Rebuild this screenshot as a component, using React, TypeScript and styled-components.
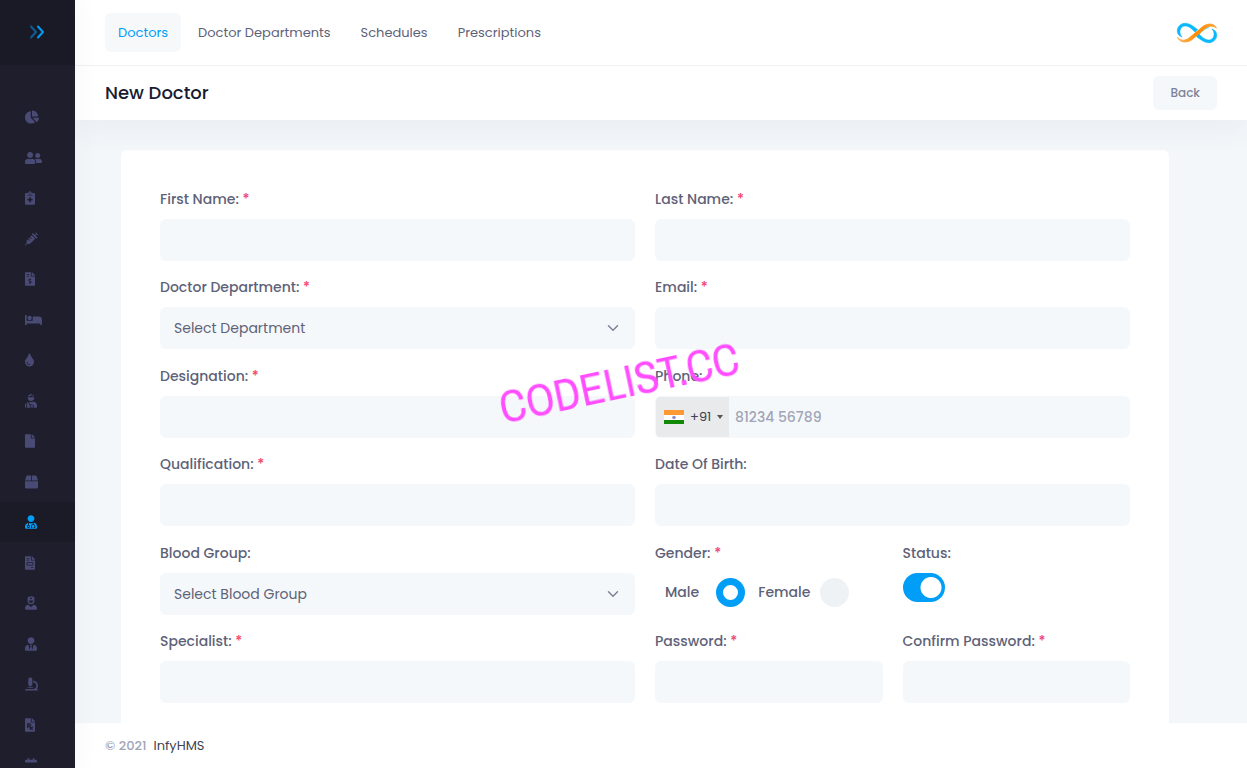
import React, { useState } from "react";
import styled, { createGlobalStyle, css } from "styled-components";
import type { IconType } from "react-icons";
import {
  FaBed,
  FaBox,
  FaCalendar,
  FaChartPie,
  FaFile,
  FaFileInvoice,
  FaFileInvoiceDollar,
  FaFilePrescription,
  FaMicroscope,
  FaNotesMedical,
  FaSyringe,
  FaTint,
  FaUserFriends,
  FaUserInjured,
  FaUserMd,
  FaUserNurse,
  FaUserTie,
} from "react-icons/fa";

const GlobalStyle = createGlobalStyle`
  *, *::before, *::after { box-sizing: border-box; }
  body {
    margin: 0;
    font-family: Poppins, Inter, "Noto Sans", sans-serif;
    font-size: 14px;
    color: #5e6278;
    background: #f3f7fa;
  }
  button, input, select { font: inherit; color: inherit; }
`;

const Shell = styled.div`
  display: flex;
  height: 100vh;
  overflow: hidden;
`;

const Sidebar = styled.aside`
  display: flex;
  flex-direction: column;
  flex: none;
  width: 75px;
  padding-bottom: 5px;
  background: #1e1e2d;
  box-shadow: 0 0 28px rgba(82, 63, 105, 0.05);
  z-index: 3;
`;

const SidebarToggle = styled.button`
  display: flex;
  align-items: center;
  justify-content: center;
  flex: none;
  height: 65px;
  padding: 0 2px 1px 0;
  border: 0;
  background: #1a1a27;
  cursor: pointer;
`;

const Menu = styled.ul`
  flex: 1;
  min-height: 0;
  margin: 32px 0 0;
  padding: 0;
  list-style: none;
  overflow-y: auto;
  scrollbar-width: none;
`;

const MenuItem = styled.li`
  height: 40px;
  &:nth-child(even) {
    height: 41px;
  }
`;

const MenuLink = styled.a<{ $iconWidth: number; $active?: boolean }>`
  display: flex;
  align-items: center;
  height: 100%;
  padding-left: 25px;
  color: ${(p) => (p.$active ? "#009ef7" : "#494b74")};
  background: ${(p) => (p.$active ? "#1b1b28" : "transparent")};
  > svg {
    width: ${(p) => p.$iconWidth}px;
    height: 14px;
  }
`;

const Main = styled.div`
  display: flex;
  flex-direction: column;
  flex: 1;
  min-width: 0;
`;

const Header = styled.header`
  display: flex;
  align-items: center;
  justify-content: space-between;
  flex: none;
  height: 66px;
  padding: 0 30px;
  background: #fff;
  border-bottom: 1px solid #eff0f4;
  z-index: 2;
`;

const Tabs = styled.nav`
  display: flex;
  gap: 4px;
`;

const Tab = styled.a<{ $active?: boolean }>`
  padding: 0 13px;
  border-radius: 6px;
  line-height: 39px;
  font-size: 13px;
  text-decoration: none;
  color: ${(p) => (p.$active ? "#009ef7" : "#5e6278")};
  background: ${(p) => (p.$active ? "#f7f8fa" : "transparent")};
`;

const Toolbar = styled.div`
  display: flex;
  align-items: center;
  justify-content: space-between;
  flex: none;
  height: 54px;
  padding: 0 30px;
  background: #fff;
  box-shadow: 0 10px 30px rgba(82, 63, 105, 0.05);
  z-index: 1;
`;

const Title = styled.h1`
  margin: 0;
  padding-bottom: 2px;
  font-size: 18px;
  font-weight: 500;
  color: #181c32;
`;

const BackButton = styled.button`
  height: 34px;
  padding: 0 17px;
  border: 0;
  border-radius: 6px;
  background: #f5f8fa;
  color: #7e8299;
  font-size: 12px;
  font-weight: 500;
  cursor: pointer;
`;

const Content = styled.main`
  flex: 1;
  min-height: 0;
  padding: 30px 78px 0 46px;
  overflow-y: auto;
  scrollbar-width: none;
`;

const Card = styled.form`
  padding: 39px;
  border-radius: 6px;
  background: #fff;
`;

const Row = styled.div`
  display: grid;
  grid-template-columns: 1fr 1fr;
  column-gap: 20px;
  height: 88px;
  &:nth-child(even) {
    height: 89px;
  }
`;

const Split = styled.div`
  display: grid;
  grid-template-columns: 1fr 1fr;
  column-gap: 20px;
`;

const FieldBox = styled.div`
  display: flex;
  flex-direction: column;
  gap: 10px;
  min-width: 0;
`;

const Label = styled.label`
  line-height: 20px;
  font-weight: 500;
  white-space: nowrap;
`;

const Star = styled.span`
  color: #f1416c;
`;

const control = css`
  width: 100%;
  height: 42px;
  border: 0;
  border-radius: 6px;
  background-color: #f5f8fa;
  outline: 0;
`;

const Input = styled.input`
  ${control}
  padding: 0 14px;
`;

const SelectWrap = styled.div`
  display: grid;
  align-items: center;
  > * {
    grid-area: 1 / 1;
  }
  > svg {
    justify-self: end;
    margin-right: 16px;
    pointer-events: none;
  }
`;

const Select = styled.select`
  ${control}
  padding: 0 14px;
  appearance: none;
`;

const PhoneBox = styled.div`
  ${control}
  display: flex;
  padding: 1px;
`;

const DialCode = styled.button`
  display: flex;
  align-items: center;
  gap: 6px;
  flex: none;
  width: 73px;
  padding: 0 0 0 8px;
  border: 0;
  border-radius: 4px 0 0 4px;
  background: #e9eaec;
  color: #3f4254;
  font-size: 13px;
`;

const Caret = styled.span`
  border: 3px solid transparent;
  border-top: 4px solid #555;
  border-bottom: 0;
`;

const PhoneInput = styled.input`
  flex: 1;
  min-width: 0;
  padding: 0 6px;
  border: 0;
  background: transparent;
  outline: 0;
  &::placeholder {
    color: #a1a5b7;
    font-weight: 500;
    opacity: 1;
  }
`;

const Choices = styled.div`
  display: flex;
  align-items: center;
  height: 39px;
  padding-left: 10px;
`;

const ChoiceLabel = styled.label<{ $gap: number }>`
  display: flex;
  align-items: center;
  gap: ${(p) => p.$gap}px;
  margin-right: 13px;
  font-weight: 500;
`;

const Radio = styled.input`
  appearance: none;
  width: 29px;
  height: 29px;
  margin: 0;
  border-radius: 50%;
  background: #eff2f5;
  &:checked {
    border: 7px solid #009ef7;
    background: #fff;
  }
`;

const Switch = styled.input`
  appearance: none;
  width: 42px;
  height: 29px;
  margin: 0;
  border-radius: 15px;
  background: radial-gradient(circle at 14px 50%, #fff 10px, transparent 11px) #e4e6ef;
  &:checked {
    background: radial-gradient(circle at 28px 50%, #fff 10px, transparent 11px) #009ef7;
  }
`;

const Watermark = styled.div`
  position: fixed;
  left: 619px;
  top: 382px;
  z-index: 5;
  transform: translate(-50%, -50%) rotate(-12deg);
  font-family: "Arial Narrow", "Archivo Narrow", "Roboto Condensed", Roboto, "Liberation Sans", sans-serif;
  font-size: 45px;
  line-height: 1;
  color: #ff4dff;
  pointer-events: none;
`;

const Footer = styled.footer`
  display: flex;
  align-items: center;
  gap: 7px;
  flex: none;
  height: 45px;
  padding: 0 30px;
  background: #fff;
  font-size: 13px;
  color: #a1a5b7;
  font-weight: 500;
  z-index: 1;
`;

const FooterLink = styled.a`
  color: #3f4254;
  font-weight: 400;
  text-decoration: none;
`;

const menu: { name: string; Icon: IconType; width: number; active?: boolean }[] = [
  { name: "Dashboard", Icon: FaChartPie, width: 14 },
  { name: "Users", Icon: FaUserFriends, width: 17 },
  { name: "Appointments", Icon: FaNotesMedical, width: 10 },
  { name: "Vaccinations", Icon: FaSyringe, width: 13 },
  { name: "Billing", Icon: FaFileInvoiceDollar, width: 10 },
  { name: "Beds", Icon: FaBed, width: 17 },
  { name: "Blood bank", Icon: FaTint, width: 9 },
  { name: "Patients", Icon: FaUserInjured, width: 12 },
  { name: "Documents", Icon: FaFile, width: 10 },
  { name: "Inventory", Icon: FaBox, width: 13 },
  { name: "Doctors", Icon: FaUserMd, width: 12, active: true },
  { name: "Reports", Icon: FaFileInvoice, width: 10 },
  { name: "Nurses", Icon: FaUserNurse, width: 12 },
  { name: "Staff", Icon: FaUserTie, width: 12 },
  { name: "Laboratory", Icon: FaMicroscope, width: 13 },
  { name: "Prescriptions", Icon: FaFilePrescription, width: 10 },
  { name: "Calendar", Icon: FaCalendar, width: 12 },
];

const tabs = ["Doctors", "Doctor Departments", "Schedules", "Prescriptions"];

function Chevrons() {
  return (
    <svg width="16" height="14" viewBox="0 0 16 14" fill="none" stroke="#009ef7" strokeWidth="2" strokeLinecap="round" strokeLinejoin="round">
      <path d="M2 1.500 7 7l-5 5.500" opacity=".5" />
      <path d="M9 1.500 14 7l-5 5.500" />
    </svg>
  );
}

const loop = "M5 14C2 11 2 5 6.500 3.200 11 2 14 5 18 9l2.500-2.500C15 2 11-.5 6 .5-1.500 3-1.500 12 5 14z";

function Logo() {
  return (
    <svg width="40" height="20" viewBox="0 0 40 20" overflow="visible" role="img" aria-label="InfyHMS">
      <defs>
        <linearGradient id="orange" x1="0" x2="1">
          <stop offset="0" stopColor="#fbb561" />
          <stop offset=".5" stopColor="#ff8a00" />
          <stop offset="1" stopColor="#ffa133" />
        </linearGradient>
      </defs>
      <path d="M11 17C15 16 17 12 20 9M21 12c4-5 7-7 11-8" fill="none" stroke="#7fe3fb" strokeWidth="2" />
      <g fill="#08b8fb" stroke="#08b8fb" strokeWidth=".6">
        <path d={loop} />
        <path d={loop} transform="rotate(180 20 10)" />
      </g>
      <path
        fill="url(#orange)"
        stroke="url(#orange)"
        strokeWidth=".8"
        d="M.5 14C3 18 8 18 12 15L24 5C29 .500 36-1 39.500 5 35 2 31 3 27.500 6L17 15C11 21 2 20 .5 14z"
      />
    </svg>
  );
}

function Flag() {
  return (
    <svg width="20" height="14" viewBox="0 0 20 14">
      <path fill="#f93" d="M0 0h20v5H0z" />
      <path fill="#fff" d="M0 5h20v5H0z" />
      <path fill="#128807" d="M0 10h20v4H0z" />
      <circle cx="10" cy="7.500" r="1.800" fill="#8d8dc8" />
    </svg>
  );
}

type FieldProps = { id: string; label: string; required?: boolean; children?: React.ReactNode };

function Field({ id, label, required, children }: FieldProps) {
  return (
    <FieldBox>
      <Label htmlFor={id}>
        {label}: {required && <Star>*</Star>}
      </Label>
      {children ?? <Input id={id} type={id.includes("assword") ? "password" : "text"} />}
    </FieldBox>
  );
}

function SelectField({ id, label, required, placeholder }: FieldProps & { placeholder: string }) {
  return (
    <Field id={id} label={label} required={required}>
      <SelectWrap>
        <Select id={id}>
          <option>{placeholder}</option>
        </Select>
        <svg width="12" height="12" viewBox="0 0 16 16" fill="none" stroke="#7e8299" strokeWidth="2" strokeLinecap="round" strokeLinejoin="round">
          <path d="M2 5l6 6 6-6" />
        </svg>
      </SelectWrap>
    </Field>
  );
}

export default function App() {
  const [gender, setGender] = useState("male");
  return (
    <Shell>
      <GlobalStyle />
      <Sidebar>
        <SidebarToggle aria-label="Expand menu">
          <Chevrons />
        </SidebarToggle>
        <Menu>
          {menu.map(({ name, Icon, width, active }) => (
            <MenuItem key={name}>
              <MenuLink href="#" aria-label={name} $iconWidth={width} $active={active}>
                <Icon />
              </MenuLink>
            </MenuItem>
          ))}
        </Menu>
      </Sidebar>
      <Main>
        <Header>
          <Tabs>
            {tabs.map((t, i) => (
              <Tab key={t} href="#" $active={i === 0}>
                {t}
              </Tab>
            ))}
          </Tabs>
          <Logo />
        </Header>
        <Toolbar>
          <Title>New Doctor</Title>
          <BackButton>Back</BackButton>
        </Toolbar>
        <Content>
          <Card>
            <Row>
              <Field id="firstName" label="First Name" required />
              <Field id="lastName" label="Last Name" required />
            </Row>
            <Row>
              <SelectField id="department" label="Doctor Department" required placeholder="Select Department" />
              <Field id="email" label="Email" required />
            </Row>
            <Row>
              <Field id="designation" label="Designation" required />
              <Field id="phone" label="Phone">
                <PhoneBox>
                  <DialCode type="button">
                    <Flag />
                    +91
                    <Caret />
                  </DialCode>
                  <PhoneInput id="phone" type="tel" placeholder="81234 56789" />
                </PhoneBox>
              </Field>
            </Row>
            <Row>
              <Field id="qualification" label="Qualification" required />
              <Field id="birth" label="Date Of Birth" />
            </Row>
            <Row>
              <SelectField id="blood" label="Blood Group" placeholder="Select Blood Group" />
              <Split>
                <Field id="male" label="Gender" required>
                  <Choices>
                    <ChoiceLabel $gap={17}>
                      Male
                      <Radio id="male" type="radio" name="gender" checked={gender === "male"} onChange={() => setGender("male")} />
                    </ChoiceLabel>
                    <ChoiceLabel $gap={10}>
                      Female
                      <Radio type="radio" name="gender" checked={gender === "female"} onChange={() => setGender("female")} />
                    </ChoiceLabel>
                  </Choices>
                </Field>
                <Field id="status" label="Status">
                  <Switch id="status" type="checkbox" role="switch" defaultChecked />
                </Field>
              </Split>
            </Row>
            <Row>
              <Field id="specialist" label="Specialist" required />
              <Split>
                <Field id="password" label="Password" required />
                <Field id="confirmPassword" label="Confirm Password" required />
              </Split>
            </Row>
          </Card>
        </Content>
        <Footer>
          <span>© 2021</span>
          <FooterLink href="#">InfyHMS</FooterLink>
        </Footer>
      </Main>
      <Watermark>CODELIST.CC</Watermark>
    </Shell>
  );
}
